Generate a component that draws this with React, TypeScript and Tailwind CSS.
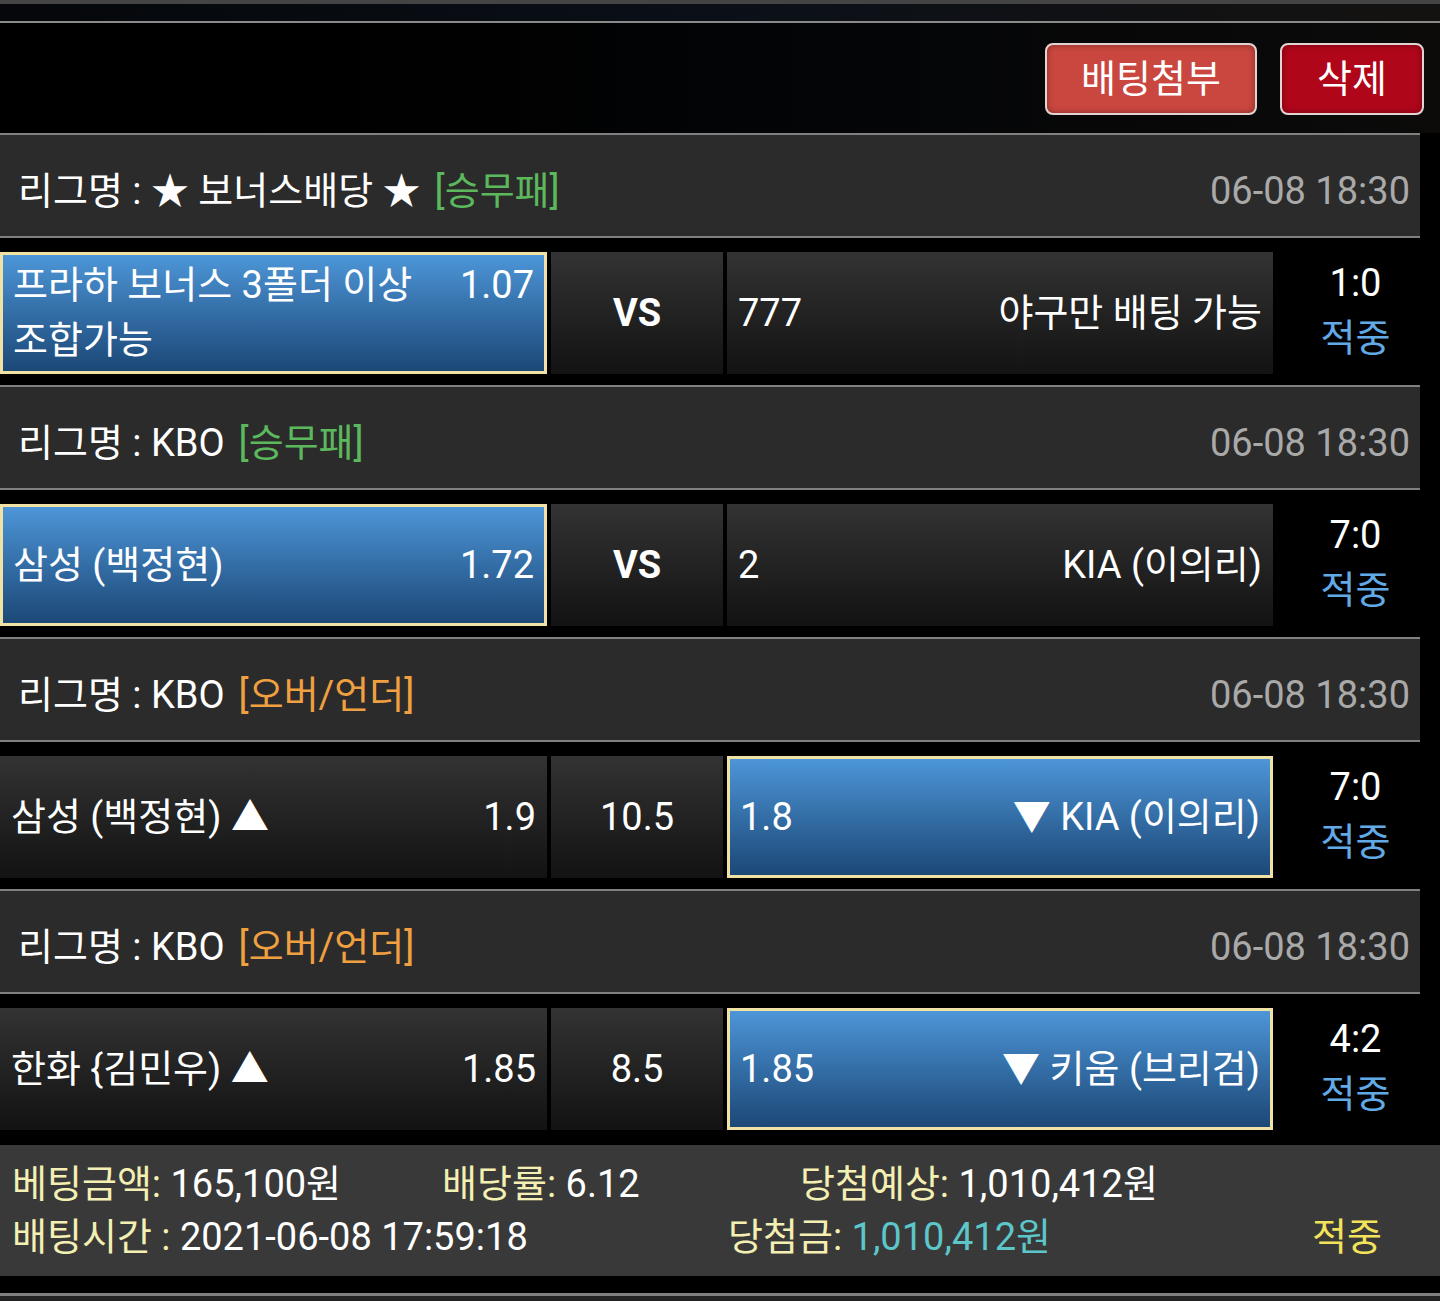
import React from 'react';

type Cell = { left?: string; right?: string; center?: string; selected?: boolean; bold?: boolean };
type Game = {
  league: string;
  kind: string;
  kindColor: string;
  date: string;
  home: Cell;
  mid: Cell;
  away: Cell;
  score: string;
};

const games: Game[] = [
  {
    league: '리그명 : ★ 보너스배당 ★',
    kind: '[승무패]',
    kindColor: 'text-[#5cb85c]',
    date: '06-08 18:30',
    home: { left: '프라하 보너스 3폴더 이상 조합가능', right: '1.07', selected: true },
    mid: { center: 'VS', bold: true },
    away: { left: '777', right: '야구만 배팅 가능' },
    score: '1:0',
  },
  {
    league: '리그명 : KBO',
    kind: '[승무패]',
    kindColor: 'text-[#5cb85c]',
    date: '06-08 18:30',
    home: { left: '삼성 (백정현)', right: '1.72', selected: true },
    mid: { center: 'VS', bold: true },
    away: { left: '2', right: 'KIA (이의리)' },
    score: '7:0',
  },
  {
    league: '리그명 : KBO',
    kind: '[오버/언더]',
    kindColor: 'text-[#f0a040]',
    date: '06-08 18:30',
    home: { left: '삼성 (백정현) ▲', right: '1.9' },
    mid: { center: '10.5' },
    away: { left: '1.8', right: '▼ KIA (이의리)', selected: true },
    score: '7:0',
  },
  {
    league: '리그명 : KBO',
    kind: '[오버/언더]',
    kindColor: 'text-[#f0a040]',
    date: '06-08 18:30',
    home: { left: '한화 {김민우) ▲', right: '1.85' },
    mid: { center: '8.5' },
    away: { left: '1.85', right: '▼ 키움 (브리검)', selected: true },
    score: '4:2',
  },
];

function BetCell({ cell, width }: { cell: Cell; width: string }) {
  const bg = cell.selected
    ? 'bg-gradient-to-b from-[#4d96d8] to-[#1c4877] border-[3px] border-[#f0e2a4]'
    : 'bg-gradient-to-b from-[#333333] to-[#131313]';
  if (cell.center) {
    return (
      <div className={`${width} h-full flex items-center justify-center ${bg} ${cell.bold ? 'font-bold' : ''}`}>
        {cell.center}
      </div>
    );
  }
  return (
    <div className={`${width} h-full flex items-center ${cell.selected ? 'px-[10px]' : 'px-[11px]'} ${bg}`}>
      <div className="w-full flex items-start gap-4 leading-[55px]">
        <div className="flex-1 break-keep">{cell.left}</div>
        <div className="text-right whitespace-nowrap">{cell.right}</div>
      </div>
    </div>
  );
}

function GameBlock({ g }: { g: Game }) {
  return (
    <div className="w-[1420px]">
      <div className="h-[2px] bg-[#808080]" />
      <div className="h-[101px] bg-[#2b2b2b] flex items-center justify-between pl-[18px] pr-[10px] pt-[12px]">
        <div className="flex items-center gap-[14px]">
          <span>{g.league}</span>
          <span className={g.kindColor}>{g.kind}</span>
        </div>
        <span className="text-[#a9a9a9]">{g.date}</span>
      </div>
      <div className="h-[2px] bg-[#808080]" />
      <div className="flex h-[122px] mt-[14px] mb-[11px] gap-[4px]">
        <BetCell cell={g.home} width="w-[547px]" />
        <BetCell cell={g.mid} width="w-[172px]" />
        <BetCell cell={g.away} width="w-[546px]" />
        <div className="flex-1 flex flex-col items-center justify-center pl-[14px] pb-[4px] leading-[55px]">
          <span>{g.score}</span>
          <span className="text-[#62aae6]">적중</span>
        </div>
      </div>
    </div>
  );
}

export default function App() {
  return (
    <div
      className="w-[1440px] h-[1301px] bg-black text-white text-[38px] overflow-hidden"
      style={{ fontFamily: 'Roboto, "Noto Sans CJK KR", sans-serif' }}
    >
      {/* 상단 */}
      <div className="h-[4px] bg-[#444]" />
      <div className="h-[17px] bg-gradient-to-r from-[#05070a] via-[#0b1018] to-[#141210]" />
      <div className="h-[2px] bg-[#8a8a8a]" />
      <div className="h-[110px] flex items-center justify-end gap-[23px] pr-[16px] pt-[2px] bg-gradient-to-r from-black via-[#030406] to-[#0c0b0a]">
        <button className="w-[212px] h-[72px] rounded-[8px] border-2 border-[#e3d4d4] bg-[#c9473f] shadow-[inset_0_0_6px_rgba(0,0,0,0.35)] text-white">
          배팅첨부
        </button>
        <button className="w-[144px] h-[72px] rounded-[8px] border-2 border-[#e3d4d4] bg-[#b0061a] shadow-[inset_0_0_6px_rgba(0,0,0,0.35)] text-white">
          삭제
        </button>
      </div>

      {games.map((g, i) => (
        <GameBlock key={i} g={g} />
      ))}

      {/* 합계 */}
      <div className="mt-[15px] h-[131px] bg-[#393939] flex flex-col justify-center pl-[12px] leading-[53px]">
        <div className="flex">
          <div className="w-[430px]">
            <span className="text-[#f4efb2]">베팅금액:</span> 165,100원
          </div>
          <div className="w-[358px]">
            <span className="text-[#f4efb2]">배당률:</span> 6.12
          </div>
          <div>
            <span className="text-[#f4efb2]">당첨예상:</span> 1,010,412원
          </div>
        </div>
        <div className="flex">
          <div className="w-[716px]">
            <span className="text-[#f4efb2]">배팅시간 :</span> 2021-06-08 17:59:18
          </div>
          <div className="w-[584px]">
            <span className="text-[#f4efb2]">당첨금:</span>{' '}
            <span className="text-[#5cc6c9]">1,010,412원</span>
          </div>
          <div className="text-[#f2e35a]">적중</div>
        </div>
      </div>
      <div className="h-[17px]" />
      <div className="h-[3px] bg-[#808080]" />
      <div className="h-[10px] bg-[#222]" />
    </div>
  );
}
